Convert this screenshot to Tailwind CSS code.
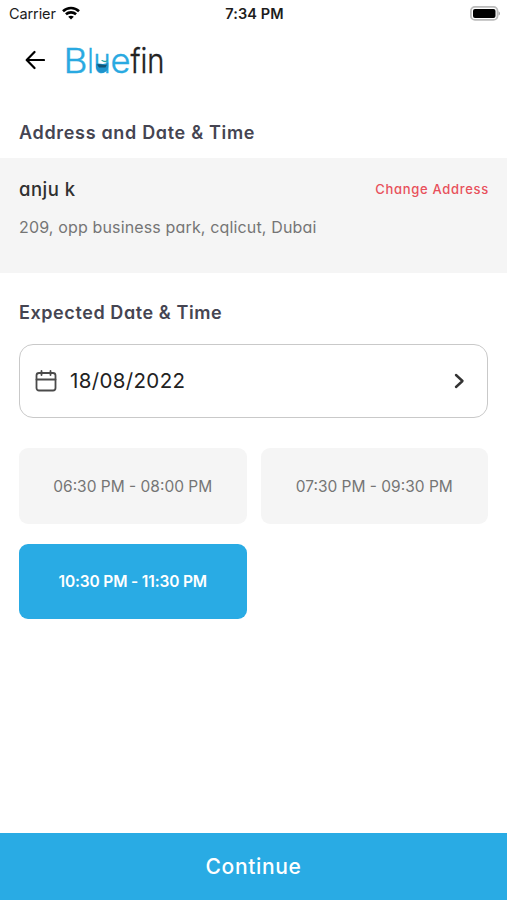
<!DOCTYPE html>
<html lang="en">
<head>
    <meta charset="UTF-8">
    <meta name="viewport" content="width=device-width, initial-scale=1.0">
    <title>Bluefin - Address and Date &amp; Time</title>
    <script src="https://cdn.jsdelivr.net/npm/@tailwindcss/browser@4"></script>
</head>
<body class="bg-white font-['Inter','Liberation_Sans',sans-serif] [font-feature-settings:'cv11']">
    <div class="flex flex-col h-[900px] overflow-hidden whitespace-nowrap">
        <!-- Status Bar -->
        <div class="grid grid-cols-3 items-center h-7 pl-[9px] pr-[7px] text-[#1c1c1c] [font-feature-settings:normal]">
            <div class="flex items-center gap-[6px] text-[14.5px]">
                <span class="tracking-[-0.1px]">Carrier</span>
                <svg class="w-[18px] h-[14px] -mt-[2px]" viewBox="0 0 18 14" fill="none" stroke="#000" stroke-width="2.6">
                    <path d="M1 5.2C5.5 .9 12.5 .9 17 5.2"/>
                    <path d="M3.9 8.3C6.8 5.7 11.2 5.7 14.1 8.3"/>
                    <path d="M9 13.5L6.2 10.7C7.8 9.3 10.2 9.3 11.8 10.7Z" fill="#000" stroke="none"/>
                </svg>
            </div>
            <div class="text-center text-[14.5px] font-semibold tracking-[0.1px]">7:34 PM</div>
            <svg class="w-[30px] h-[15px] justify-self-end -mt-[2px]" viewBox="0 0 30 15">
                <rect x=".9" y=".9" width="26.6" height="13" rx="4" fill="#fff" stroke="#bbb" stroke-width="1.8"/>
                <rect x="3" y="3" width="22.5" height="9" rx="2" fill="#000"/>
                <path d="M28.5 5.2C30.5 6 30.5 8.8 28.5 9.6Z" fill="#aaa"/>
            </svg>
        </div>

        <!-- Header -->
        <header class="flex items-center h-[64px] pl-[25px] gap-[16px]">
            <svg class="w-5 h-5" viewBox="0 0 20 20" fill="none" stroke="#000" stroke-width="2.2" stroke-linecap="round" stroke-linejoin="round">
                <path d="M19 10H2M9.5 2L1.7 10L9.5 18"/>
            </svg>
            <svg class="w-[112px] h-[44px]" viewBox="0 0 112 44" font-family="Inter, sans-serif" font-weight="300" font-size="34" stroke-width=".4">
                <g fill="#29a9e1" stroke="#29a9e1">
                    <text x="2.5" y="35" textLength="24" lengthAdjust="spacingAndGlyphs">B</text>
                    <text x="26.5" y="35" textLength="6" lengthAdjust="spacingAndGlyphs">l</text>
                    <text x="32.5" y="35" textLength="17" lengthAdjust="spacingAndGlyphs">u</text>
                    <text x="49.5" y="35" textLength="20" lengthAdjust="spacingAndGlyphs">e</text>
                </g>
                <text x="69.5" y="35" textLength="34" lengthAdjust="spacingAndGlyphs" fill="#222" stroke="#222">fin</text>
                <!-- water and fish inside the u -->
                <path d="M35 26C38 24.5 42 27.500 47.300 24.500V28C47.300 37 35 37 35 28Z" fill="#1e93cc"/>
                <path d="M36 26.500C39 25.500 42 28 46 26.500L44.500 29.500H38Z" fill="#135575"/>
                <path d="M40 22C43 22 44 24 47 21.500C46 25 43 25 40 22Z" fill="#2aa5a0"/>
            </svg>
        </header>

        <main class="flex-1">
            <h2 class="mt-[27px] pl-[19px] h-[28px] leading-[28px] text-[18px] tracking-[0.68px] font-semibold text-[#454552]">Address and Date &amp; Time</h2>

            <!-- Address -->
            <section class="mt-[11px] h-[115px] bg-[#f5f5f5] pl-[19px] pr-[18px] pt-[17px]">
                <div class="flex items-center justify-between h-[30px]">
                    <span class="text-[18.5px] tracking-[0.5px] font-medium text-[#303030]">anju k</span>
                    <a href="#" class="text-[13px] tracking-[0.7px] font-medium text-[#e8505b]">Change Address</a>
                </div>
                <p class="mt-[8px] leading-[28px] text-[16px] tracking-[0.15px] text-[#757575]">209, opp business park, cqlicut, Dubai</p>
            </section>

            <!-- Date -->
            <h2 class="mt-[26px] pl-[19px] h-[28px] leading-[28px] text-[18px] tracking-[0.58px] font-semibold text-[#454552]">Expected Date &amp; Time</h2>
            <div class="flex items-center mx-[19px] mt-[17px] h-[74px] rounded-[14px] border-[1.5px] border-[#c9c9c9] pl-[15px] pr-[22px]">
                <svg class="w-[22px] h-[22px]" viewBox="0 0 22 22" fill="none" stroke="#4a4a4a" stroke-width="1.8" stroke-linecap="round">
                    <rect x="1.5" y="3" width="19" height="17.5" rx="2.5"/>
                    <path d="M1.5 9.5H20.5M6.5 1V5M15.5 1V5"/>
                </svg>
                <span class="ml-[13px] text-[20.5px] tracking-[0.35px] text-[#222]">18/08/2022</span>
                <svg class="ml-auto w-[11px] h-4" viewBox="0 0 11 16" fill="none" stroke="#333" stroke-width="2.4" stroke-linecap="round" stroke-linejoin="round">
                    <path d="M2 2L8.5 8L2 14"/>
                </svg>
            </div>

            <!-- Time Slots -->
            <div class="grid grid-cols-2 gap-x-[14px] gap-y-5 mx-[19px] mt-[30px] text-[15.5px] text-[#757575]">
                <button class="h-[75.5px] pt-[1.5px] rounded-[9px] bg-[#f5f5f5]">06:30 PM - 08:00 PM</button>
                <button class="h-[75.5px] pt-[1.5px] rounded-[9px] bg-[#f5f5f5]">07:30 PM - 09:30 PM</button>
                <button class="h-[75.5px] pt-[1.5px] rounded-[9px] bg-[#29abe4] text-white font-semibold tracking-[-0.15px]">10:30 PM - 11:30 PM</button>
            </div>
        </main>

        <button class="h-[67px] pt-px bg-[#29abe4] text-white text-[21px] tracking-[0.65px] font-medium">Continue</button>
    </div>
</body>
</html>
